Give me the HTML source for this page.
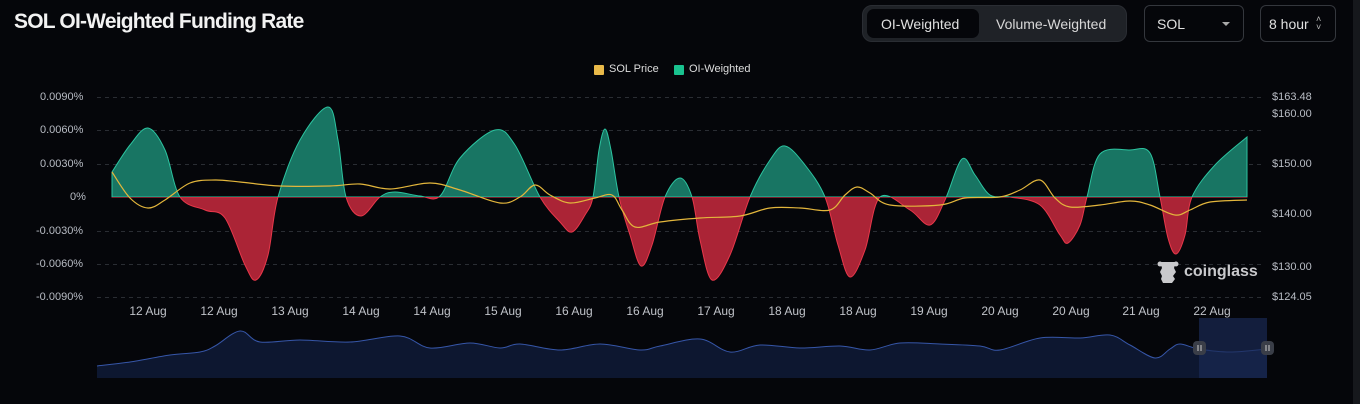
<!DOCTYPE html>
<html><head><meta charset="utf-8"><style>
body{margin:0;width:1360px;height:404px;background:#05060a;overflow:hidden;font-family:"Liberation Sans",sans-serif;color:#e8e8ea;position:relative}
.t{position:absolute;left:14px;top:10px;font-size:21px;font-weight:bold;letter-spacing:-0.8px;color:#f2f2f2}
.grp{position:absolute;left:862px;top:5px;width:265px;height:37px;background:#1f2227;border-radius:10px;border:1px solid #2a2d33;box-sizing:border-box}
.act{position:absolute;left:4px;top:3px;width:112px;height:29px;background:#05060a;border-radius:7px}
.lbl{position:absolute;font-size:14px;color:#e0e0e0}
.box{position:absolute;top:5px;height:37px;border:1px solid #34373d;border-radius:6px;box-sizing:border-box}
.ax{position:absolute;font-size:11px;color:#b8bcc4}
.xl{position:absolute;top:304px;font-size:12px;color:#c0c3c9;transform:translateX(-50%)}
</style></head><body>
<div class="t">SOL OI-Weighted Funding Rate</div>
<div class="grp"><div class="act"></div></div>
<div class="lbl" style="left:881px;top:16px">OI-Weighted</div>
<div class="lbl" style="left:996px;top:16px;color:#d8d8d8">Volume-Weighted</div>
<div class="box" style="left:1144px;width:100px"></div>
<div class="lbl" style="left:1157px;top:16px">SOL</div>
<div style="position:absolute;left:1222px;top:22px;border:4px solid transparent;border-top:4px solid #aaa;border-bottom:0"></div>
<div class="box" style="left:1260px;width:76px"></div>
<div class="lbl" style="left:1269px;top:16px">8 hour</div>
<div style="position:absolute;left:1316px;top:15px;font-size:9px;color:#bbb;line-height:8px">˄<br>˅</div>
<div style="position:absolute;left:1353px;top:0;width:7px;height:404px;background:#16181c"></div>

<div style="position:absolute;left:594px;top:65px;width:10px;height:10px;background:#e9b949;border-radius:1px"></div>
<div class="ax" style="left:609px;top:63px;color:#ddd">SOL Price</div>
<div style="position:absolute;left:674px;top:65px;width:10px;height:10px;background:#19c28f;border-radius:1px"></div>
<div class="ax" style="left:689px;top:63px;color:#ddd">OI-Weighted</div>

<div class="ax" style="left:40px;top:91px">0.0090%</div>
<div class="ax" style="left:40px;top:124px">0.0060%</div>
<div class="ax" style="left:40px;top:158px">0.0030%</div>
<div class="ax" style="left:70px;top:191px">0%</div>
<div class="ax" style="left:36px;top:225px">-0.0030%</div>
<div class="ax" style="left:36px;top:258px">-0.0060%</div>
<div class="ax" style="left:36px;top:291px">-0.0090%</div>
<div class="ax" style="left:1272px;top:91px">$163.48</div>
<div class="ax" style="left:1272px;top:108px">$160.00</div>
<div class="ax" style="left:1272px;top:158px">$150.00</div>
<div class="ax" style="left:1272px;top:208px">$140.00</div>
<div class="ax" style="left:1272px;top:261px">$130.00</div>
<div class="ax" style="left:1272px;top:291px">$124.05</div>

<div class="xl" style="left:148px">12 Aug</div><div class="xl" style="left:219px">12 Aug</div>
<div class="xl" style="left:290px">13 Aug</div><div class="xl" style="left:361px">14 Aug</div>
<div class="xl" style="left:432px">14 Aug</div><div class="xl" style="left:503px">15 Aug</div>
<div class="xl" style="left:574px">16 Aug</div><div class="xl" style="left:645px">16 Aug</div>
<div class="xl" style="left:716px">17 Aug</div><div class="xl" style="left:787px">18 Aug</div>
<div class="xl" style="left:858px">18 Aug</div><div class="xl" style="left:929px">19 Aug</div>
<div class="xl" style="left:1000px">20 Aug</div><div class="xl" style="left:1071px">20 Aug</div>
<div class="xl" style="left:1141px">21 Aug</div><div class="xl" style="left:1212px">22 Aug</div>

<svg width="1360" height="404" style="position:absolute;left:0;top:0">
<defs>
<clipPath id="up"><rect x="0" y="0" width="1360" height="197"/></clipPath>
<clipPath id="dn"><rect x="0" y="197" width="1360" height="120"/></clipPath>
</defs>
<g stroke="#2a2d33" stroke-dasharray="4 4" stroke-width="1">
<line x1="97" x2="1262" y1="97.5" y2="97.5"/><line x1="97" x2="1262" y1="130.5" y2="130.5"/>
<line x1="97" x2="1262" y1="164.5" y2="164.5"/><line x1="97" x2="1262" y1="231.5" y2="231.5"/>
<line x1="97" x2="1262" y1="264.5" y2="264.5"/><line x1="97" x2="1262" y1="297.5" y2="297.5"/>
</g>
<g id="fr"></g>
<path id="price" fill="none" stroke="#e3b63c" stroke-width="1.2"/>
<path id="navf" fill="#0d1730"/>
<path id="nav" fill="none" stroke="#3656a8" stroke-width="1"/>
<rect x="1199" y="318" width="68" height="60" fill="#1a2a52" opacity="0.7"/>
<rect x="1193" y="341" width="13" height="14" rx="4" fill="#3a3e48"/>
<rect x="1261" y="341" width="13" height="14" rx="4" fill="#3a3e48"/>
<g stroke="#ccc" stroke-width="1"><line x1="1198" x2="1198" y1="345" y2="351"/><line x1="1201" x2="1201" y1="345" y2="351"/><line x1="1266" x2="1266" y1="345" y2="351"/><line x1="1269" x2="1269" y1="345" y2="351"/></g>
<g fill="#c9c9cc"><path d="M1160 262h16l-2 6 2 4-3 4 2 3-3 4h-9l-2-4 1-3-2-4 2-4z"/><circle cx="1160" cy="264" r="2.5"/><circle cx="1176" cy="264" r="2.5"/></g>
<text x="1184" y="276" fill="#c9c9cc" font-family="Liberation Sans,sans-serif" font-size="16" font-weight="bold">coinglass</text>
</svg>
<script>
function cr(p){let d="M"+p[0][0]+" "+p[0][1];for(let i=0;i<p.length-1;i++){const a=p[i-1]||p[i],b=p[i],c=p[i+1],e=p[i+2]||c;d+=" C"+(b[0]+(c[0]-a[0])/6)+" "+(b[1]+(c[1]-a[1])/6)+" "+(c[0]-(e[0]-b[0])/6)+" "+(c[1]-(e[1]-b[1])/6)+" "+c[0]+" "+c[1];}return d;}
const f=[[112,172],[130,145],[148,128],[165,150],[180,197],[205,210],[225,218],[245,265],[256,280],[268,255],[278,197],[300,140],[328,107],[338,140],[346,197],[361,216],[380,197],[395,192],[420,196],[440,196],[460,158],[495,130],[515,145],[540,197],[560,222],[572,232],[585,215],[593,197],[599,150],[605,129],[611,150],[619,197],[630,235],[641,266],[652,245],[665,197],[680,178],[692,197],[700,240],[712,280],[730,255],[750,197],[770,160],[785,146],[805,165],[825,197],[838,245],[850,277],[865,250],[880,197],[910,210],[930,225],[945,200],[962,159],[975,175],[990,195],[1010,197],[1040,205],[1060,235],[1068,243],[1080,225],[1087,197],[1100,154],[1130,150],[1150,153],[1160,197],[1168,238],[1176,254],[1185,235],[1192,197],[1215,165],[1247,137]];
const d=cr(f)+" L1247 197 L112 197 Z";
document.getElementById("fr").innerHTML='<path d="'+d+'" clip-path="url(#up)" fill="#187563" stroke="#2cc4a0" stroke-width="1"/><path d="'+d+'" clip-path="url(#dn)" fill="#ab2436" stroke="#e8374a" stroke-width="1"/>';
const p=[[112,172],[130,198],[148,208],[165,200],[190,183],[215,180],[240,182],[280,186],[330,186],[360,184],[390,189],[430,183],[460,190],[500,203],[520,197],[535,185],[550,195],[570,203],[595,198],[612,195],[622,210],[635,227],[660,222],[700,218],[740,216],[770,208],[800,208],[830,210],[845,195],[857,187],[870,193],[890,205],[940,205],[965,198],[1000,197],[1020,190],[1040,180],[1055,198],[1070,207],[1100,205],[1130,201],[1150,205],[1175,215],[1190,210],[1210,202],[1247,200]];
document.getElementById("price").setAttribute("d",cr(p));
const n=[[97,366],[130,362],[170,355],[200,352],[215,346],[240,331],[260,342],[300,340],[350,342],[400,336],[430,348],[470,343],[500,348],[520,344],[560,350],[600,344],[640,350],[660,346],[700,339],[730,352],[760,345],[800,348],[840,346],[870,350],[900,343],[940,344],[980,346],[1000,350],[1040,338],[1080,338],[1110,335],[1130,345],[1155,358],[1170,349],[1180,344],[1199,349],[1230,352],[1267,349]];
document.getElementById("nav").setAttribute("d",cr(n));
document.getElementById("navf").setAttribute("d",cr(n)+" L1267 378 L97 378 Z");
</script>
</body></html>
